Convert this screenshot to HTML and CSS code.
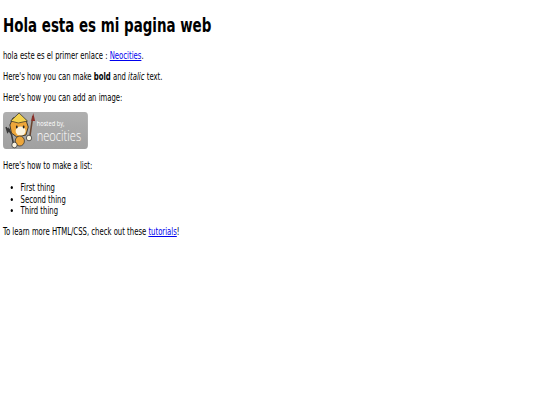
FILE: index.html
```html
<!DOCTYPE html>
<html lang="es">

<head>
  <meta charset="UTF-8">
  <meta name="viewport" content="width=device-width, initial-scale=1.0">
  <title>Hola esta es mi pagina web</title>
  <link rel="stylesheet" href="styles.css">
</head>

<body>
  <div class="page">
    <h1>Hola esta es mi pagina web</h1>
    <p>hola este es el primer enlace : <a href="#">Neocities</a>.</p>
    <p>Here's how you can make <strong>bold</strong> and <em>italic</em> text.</p>
    <p>Here's how you can add an image:</p>
    <div class="badge">
      <svg class="cat" viewBox="0 0 42 37" width="42" height="37">
        <path d="M37 4 L33 25" stroke="#6a4630" stroke-width="2" fill="none"/>
        <path d="M37.500 1 L40 9 L35 9 Z" fill="#8c2f2a"/>
        <path d="M9 22 L4 16 M2 15 L4 20 L7 17 M9 22 L12 33" stroke="#3a3a3a" stroke-width="2" fill="none"/>
        <path d="M7 13 L11 6 L20 4 L28 8 L31 15 L28 23 L16 25 L9 21 Z" fill="#eda63a" stroke="#2a2a2a"/>
        <path d="M8 9 L19 1 L30 9 L18 11 Z" fill="#f3d24e" stroke="#2a2a2a" stroke-width=".8"/>
        <ellipse cx="21" cy="19" rx="6.500" ry="4.500" fill="#fbf3df"/>
        <ellipse cx="16" cy="15" rx="1.200" ry="1.400" fill="#222"/>
        <ellipse cx="25" cy="15" rx="1.200" ry="1.400" fill="#222"/>
        <ellipse cx="20" cy="29" rx="6" ry="5" fill="#eda63a" stroke="#2a2a2a" stroke-width=".8"/>
        <ellipse cx="13" cy="33" rx="3.500" ry="2.800" fill="#fbf3df" stroke="#2a2a2a" stroke-width=".8"/>
        <ellipse cx="32" cy="26" rx="3.500" ry="2.800" fill="#fbf3df" stroke="#2a2a2a" stroke-width=".8"/>
      </svg>
      <div class="badge-text">
        <span class="hosted">hosted by,</span>
        <span class="neo">neocities</span>
      </div>
    </div>
    <p>Here's how to make a list:</p>
    <ul>
      <li>First thing</li>
      <li>Second thing</li>
      <li>Third thing</li>
    </ul>
    <p>To learn more HTML/CSS, check out these <a href="#">tutorials</a>!</p>
  </div>
</body>

</html>
```

FILE: styles.css
```css
* {
  box-sizing: border-box;
}

body {
  margin: 0;
  padding: 0 3px;
  font-family: "DejaVu Sans Condensed", "DejaVu Sans", sans-serif;
  font-size: 10px;
  line-height: 11.500px;
  color: #000;
  background-color: #fff;
}

/* the whole page is squeezed sideways in the shot */
.page {
  transform: scaleX(.765);
  transform-origin: left top;
}

h1 {
  margin: 0;
  padding: 14px 0 13px;
  font-size: 19.500px;
  line-height: 23px;
}

p {
  margin: 0 0 9.500px;
}

a {
  color: #00e;
}

ul {
  margin: 0 0 9.500px;
  padding: 1px 0 0 23px;
}

.badge {
  display: flex;
  width: 111px;
  height: 37px;
  margin-top: -1px;
  margin-bottom: 11px;
  border-radius: 4px;
  background: linear-gradient(#b0b0b0, #a0a0a0);
}

.cat {
  flex-shrink: 0;
  margin-left: 2px;
}

.badge-text {
  display: flex;
  flex-direction: column;
  padding-top: 7px;
  color: #fff;
}

.hosted {
  font-family: "Open Sans", sans-serif;
  font-size: 7.500px;
  line-height: 9px;
}

.neo {
  font-family: "Open Sans", sans-serif;
  font-weight: 300;
  font-size: 14.500px;
  line-height: 15px;
}
```
